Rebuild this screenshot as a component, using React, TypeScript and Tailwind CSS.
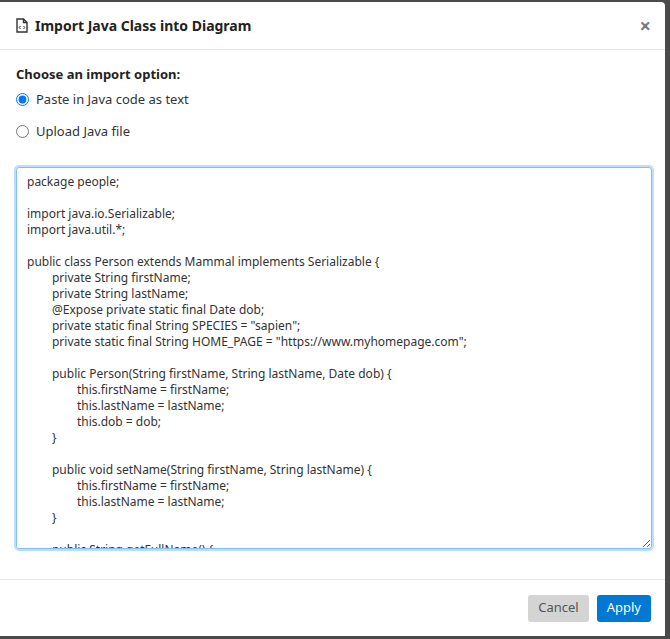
const code = `package people;

import java.io.Serializable;
import java.util.*;

public class Person extends Mammal implements Serializable {
\tprivate String firstName;
\tprivate String lastName;
\t@Expose private static final Date dob;
\tprivate static final String SPECIES = "sapien";
\tprivate static final String HOME_PAGE = "https://www.myhomepage.com";

\tpublic Person(String firstName, String lastName, Date dob) {
\t\tthis.firstName = firstName;
\t\tthis.lastName = lastName;
\t\tthis.dob = dob;
\t}

\tpublic void setName(String firstName, String lastName) {
\t\tthis.firstName = firstName;
\t\tthis.lastName = lastName;
\t}

\tpublic String getFullName() {
\t\treturn firstName + " " + lastName;
\t}
}`;

function FileCodeIcon() {
  return (
    <svg width="12" height="15" viewBox="0 0 12 15" fill="none" stroke="#333" strokeWidth="1.4">
      <path d="M1 1h6.5L11 4.5V14H1z" />
      <path d="M7.5 1v3.5H11" />
      <path d="M4.5 8l-1.3 1.5L4.5 11M7.5 8l1.3 1.5L7.5 11" strokeWidth="1" />
    </svg>
  );
}

export default function App() {
  return (
    <div className="w-[670px] h-[639px] bg-[#4a4a4a] pt-[2px] font-['Liberation_Sans'] text-[#333]">
      <div className="w-[665px] h-[634px] bg-white rounded-tr-[4px] flex flex-col">
        <div className="h-[48px] flex items-center px-4 border-b border-[#e5e5e5]">
          <FileCodeIcon />
          <span className="ml-[7px] text-[14px] font-bold text-[#222]">Import Java Class into Diagram</span>
          <span className="ml-auto mr-[-2px] text-[20px] font-bold text-[#777] leading-none">×</span>
        </div>
        <div className="flex-1 px-4 pt-[16px] flex flex-col">
          <div className="text-[13px] font-bold text-[#222] leading-[17px]">Choose an import option:</div>
          <label className="flex items-center mt-[8px] text-[13px] leading-[16px]">
            <input type="radio" name="opt" defaultChecked className="w-[13px] h-[13px] m-0 mr-[7px] accent-[#0075ff]" />
            Paste in Java code as text
          </label>
          <label className="flex items-center mt-[16px] text-[13px] leading-[16px]">
            <input type="radio" name="opt" className="w-[13px] h-[13px] m-0 mr-[7px]" />
            Upload Java file
          </label>
          <textarea
            defaultValue={code}
            className="mt-[28px] w-[636px] h-[382px] border border-[#80bdff] shadow-[0_0_0_2px_rgba(0,123,255,0.25)] rounded-[3px] pl-[10px] pr-0 py-[6px] text-[12px] leading-[16px] text-[#333] font-['Liberation_Sans'] [tab-size:8] outline-none resize overflow-y-scroll [&::-webkit-scrollbar]:w-[15px] [&::-webkit-scrollbar-track]:bg-[#f1f1f1] [&::-webkit-scrollbar-thumb]:bg-[#c1c1c1] [&::-webkit-scrollbar-thumb]:border-y-[16px] [&::-webkit-scrollbar-thumb]:border-x-[2px] [&::-webkit-scrollbar-thumb]:border-solid [&::-webkit-scrollbar-thumb]:border-[#f1f1f1] [&::-webkit-scrollbar-corner]:bg-[#dcdcdc]"
          />
        </div>
        <div className="h-[57px] border-t border-[#e5e5e5] flex items-center justify-end gap-2 px-[14px]">
          <button className="h-[27px] px-[10px] rounded-[3px] bg-[#d4d4d4] text-[13px] text-[#555]">Cancel</button>
          <button className="h-[27px] px-[10px] rounded-[3px] bg-[#0078d4] text-[13px] text-white">Apply</button>
        </div>
      </div>
    </div>
  );
}
